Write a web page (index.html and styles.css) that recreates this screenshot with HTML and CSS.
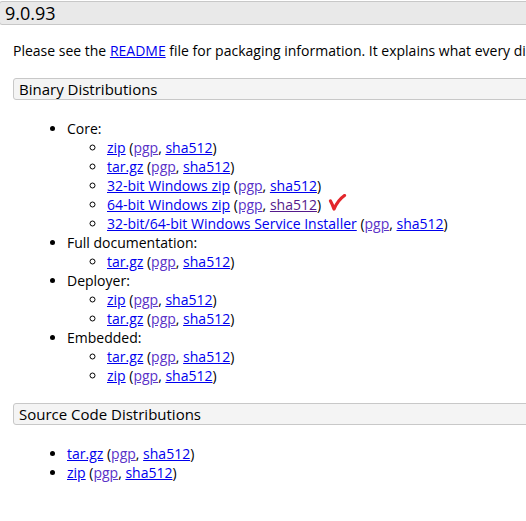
FILE: index.html
```html
<!DOCTYPE html>
<html>
<head>
<meta charset="utf-8">
<link rel="stylesheet" href="styles.css">
</head>
<body>
<div class="page">
  <h2 class="version">9.0.93</h2>
  <div class="content">
    <p class="intro">Please see the <a href="#">README</a> file for packaging information. It explains what every distribution contains.</p>
    <h3 class="section">Binary Distributions</h3>
    <ul class="outer">
      <li>Core:
        <ul class="inner">
          <li><a href="#">zip</a> (<a class="pgp" href="#">pgp</a>, <a href="#">sha512</a>)</li>
          <li><a href="#">tar.gz</a> (<a class="pgp" href="#">pgp</a>, <a href="#">sha512</a>)</li>
          <li><a href="#">32-bit Windows zip</a> (<a class="pgp" href="#">pgp</a>, <a href="#">sha512</a>)</li>
          <li class="checked"><a href="#">64-bit Windows zip</a> (<a class="pgp" href="#">pgp</a>, <a class="visited" href="#">sha512</a>)<svg class="check" width="20" height="20" viewBox="0 0 20 20"><path d="M2.5 7 Q4.5 10.5 6 15 Q10 6 16.5 1.5" fill="none" stroke="#e3262b" stroke-width="3.2" stroke-linecap="round" stroke-linejoin="round"/></svg></li>
          <li><a href="#">32-bit/64-bit Windows Service Installer</a> (<a class="pgp" href="#">pgp</a>, <a href="#">sha512</a>)</li>
        </ul>
      </li>
      <li>Full documentation:
        <ul class="inner">
          <li><a href="#">tar.gz</a> (<a class="pgp" href="#">pgp</a>, <a href="#">sha512</a>)</li>
        </ul>
      </li>
      <li>Deployer:
        <ul class="inner">
          <li><a href="#">zip</a> (<a class="pgp" href="#">pgp</a>, <a href="#">sha512</a>)</li>
          <li><a href="#">tar.gz</a> (<a class="pgp" href="#">pgp</a>, <a href="#">sha512</a>)</li>
        </ul>
      </li>
      <li>Embedded:
        <ul class="inner">
          <li><a href="#">tar.gz</a> (<a class="pgp" href="#">pgp</a>, <a href="#">sha512</a>)</li>
          <li><a href="#">zip</a> (<a class="pgp" href="#">pgp</a>, <a href="#">sha512</a>)</li>
        </ul>
      </li>
    </ul>
    <h3 class="section">Source Code Distributions</h3>
    <ul class="outer last">
      <li><a href="#">tar.gz</a> (<a class="pgp" href="#">pgp</a>, <a href="#">sha512</a>)</li>
      <li><a href="#">zip</a> (<a class="pgp" href="#">pgp</a>, <a href="#">sha512</a>)</li>
    </ul>
  </div>
</div>
</body>
</html>
```

FILE: styles.css
```css
html, body {
  margin: 0;
  padding: 0;
  background: #fff;
  overflow: hidden;
}
body {
  font-family: "Open Sans", "Noto Sans", sans-serif;
  font-size: 14px;
  line-height: 19px;
  color: #000;
}
.page {
  width: 526px;
  overflow: hidden;
}
.version {
  margin: 1px -40px 0 -1px;
  height: 22px;
  padding: 0 0 0 5px;
  border: 1px solid #c8c8c8;
  border-radius: 3px;
  background: #e9e9e9;
  font-size: 18px;
  font-weight: 400;
  line-height: 22px;
  white-space: nowrap;
}
.content {
  padding-left: 13px;
}
.intro {
  margin: 16px 0 0 0;
  white-space: nowrap;
}
a {
  color: #0000ee;
  text-decoration: underline;
}
a.pgp {
  color: #5a33c8;
}
a.visited {
  color: #551a8b;
}
.section {
  margin: 18px -40px 0 0;
  height: 20px;
  padding: 0 0 0 5px;
  border: 1px solid #c8c8c8;
  border-radius: 3px;
  background: #f4f4f4;
  font-size: 15px;
  font-weight: 500;
  line-height: 20px;
  white-space: nowrap;
}
.outer {
  margin: 19px 0 15px 0;
  padding-left: 54px;
  list-style: disc;
}
.outer.last {
  margin-top: 19px;
}
.inner {
  margin: 0;
  padding-left: 40px;
  list-style: circle;
}
li {
  white-space: nowrap;
}
.checked {
  position: relative;
}
.check {
  position: absolute;
  margin-left: 7px;
  margin-top: -1px;
}
```
